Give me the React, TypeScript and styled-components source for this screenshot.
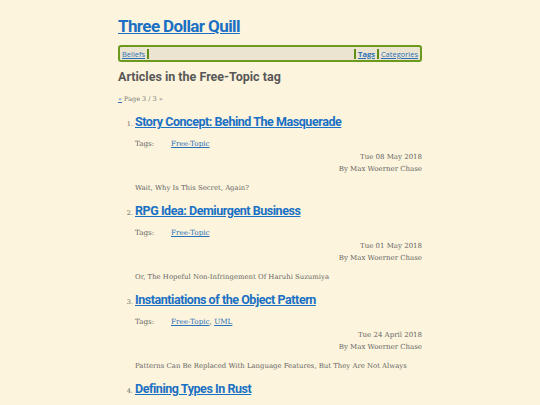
import React from "react";
import styled, { createGlobalStyle } from "styled-components";

const GlobalStyle = createGlobalStyle`
  html, body {
    margin: 0;
    padding: 0;
    background: #fcf4dc;
  }
  body {
    font-family: "DejaVu Serif", serif;
    color: #555;
  }
`;

const articles = [
  {
    title: "Story Concept: Behind The Masquerade",
    tags: ["Free-Topic"],
    date: "Tue 08 May 2018",
    summary: "Wait, Why Is This Secret, Again?",
  },
  {
    title: "RPG Idea: Demiurgent Business",
    tags: ["Free-Topic"],
    date: "Tue 01 May 2018",
    summary: "Or, The Hopeful Non-Infringement Of Haruhi Suzumiya",
  },
  {
    title: "Instantiations of the Object Pattern",
    tags: ["Free-Topic", "UML"],
    date: "Tue 24 April 2018",
    summary: "Patterns Can Be Replaced With Language Features, But They Are Not Always",
  },
  {
    title: "Defining Types In Rust",
    tags: ["Free-Topic"],
    date: "Tue 17 April 2018",
    summary: "",
  },
];

const headFont = `Roboto, sans-serif`;

const Page = styled.div`
  width: 304px;
  margin: 0 auto;
  padding-top: 15px;
`;

const SiteTitle = styled.h1`
  margin: 0;
  font-family: ${headFont};
  font-size: 17px;
  font-weight: 700;
  letter-spacing: -0.6px;
  line-height: 22px;
  a {
    color: #1a70c4;
  }
`;

const Nav = styled.nav`
  margin-top: 8px;
  display: flex;
  align-items: center;
  height: 11px;
  padding: 1px 1px;
  border: 2px solid #6b9a1f;
  border-radius: 3px;
  background: #ebe4d0;
  font-family: "Open Sans", sans-serif;
  font-size: 7.5px;
`;

const NavLink = styled.a<{ $bold?: boolean }>`
  color: #2a70b8;
  font-weight: ${(p) => (p.$bold ? 700 : 400)};
  padding: 0 1px;
`;

const Sep = styled.span`
  width: 2px;
  height: 10px;
  background: #5e8f14;
  margin: 0 1px;
`;

const Spacer = styled.div`
  flex: 1;
`;

const Heading = styled.h2`
  margin: 7px 0 0;
  font-family: ${headFont};
  font-size: 12.5px;
  font-weight: 700;
  line-height: 16px;
  color: #585858;
`;

const Pager = styled.div`
  margin-top: 10px;
  font-size: 6.5px;
  color: #777;
  a {
    color: #2a70b8;
  }
`;

const List = styled.ol`
  margin: 11px 0 0;
  padding-left: 17px;
`;

const Item = styled.li`
  font-size: 6.5px;
  color: #666;
  margin-bottom: 10px;
`;

const ItemTitle = styled.a`
  font-family: ${headFont};
  font-size: 12.5px;
  font-weight: 700;
  letter-spacing: -0.45px;
  line-height: 16px;
  color: #1a70c4;
`;

const TagRow = styled.div`
  display: flex;
  margin-top: 9px;
  font-size: 7.2px;
  line-height: 10px;
`;

const TagLabel = styled.span`
  width: 36px;
  color: #666;
`;

const TagLink = styled.a`
  color: #2a70b8;
`;

const Meta = styled.div`
  margin-top: 2px;
  text-align: right;
  font-size: 7px;
  line-height: 12px;
  color: #666;
`;

const Summary = styled.p`
  margin: 8px 0 0;
  font-size: 6.9px;
  line-height: 10px;
  color: #666;
`;

export default function App() {
  return (
    <>
      <GlobalStyle />
      <Page>
        <SiteTitle>
          <a href="#">Three Dollar Quill</a>
        </SiteTitle>
        <Nav>
          <NavLink href="#">Beliefs</NavLink>
          <Sep />
          <Spacer />
          <Sep />
          <NavLink href="#" $bold>
            Tags
          </NavLink>
          <Sep />
          <NavLink href="#">Categories</NavLink>
        </Nav>
        <Heading>Articles in the Free-Topic tag</Heading>
        <Pager>
          <a href="#">«</a> Page 3 / 3 »
        </Pager>
        <List>
          {articles.map((a) => (
            <Item key={a.title}>
              <ItemTitle href="#">{a.title}</ItemTitle>
              <TagRow>
                <TagLabel>Tags:</TagLabel>
                <span>
                  {a.tags.map((t, i) => (
                    <React.Fragment key={t}>
                      {i > 0 && ", "}
                      <TagLink href="#">{t}</TagLink>
                    </React.Fragment>
                  ))}
                </span>
              </TagRow>
              <Meta>
                {a.date}
                <br />
                By Max Woerner Chase
              </Meta>
              <Summary>{a.summary}</Summary>
            </Item>
          ))}
        </List>
      </Page>
    </>
  );
}
